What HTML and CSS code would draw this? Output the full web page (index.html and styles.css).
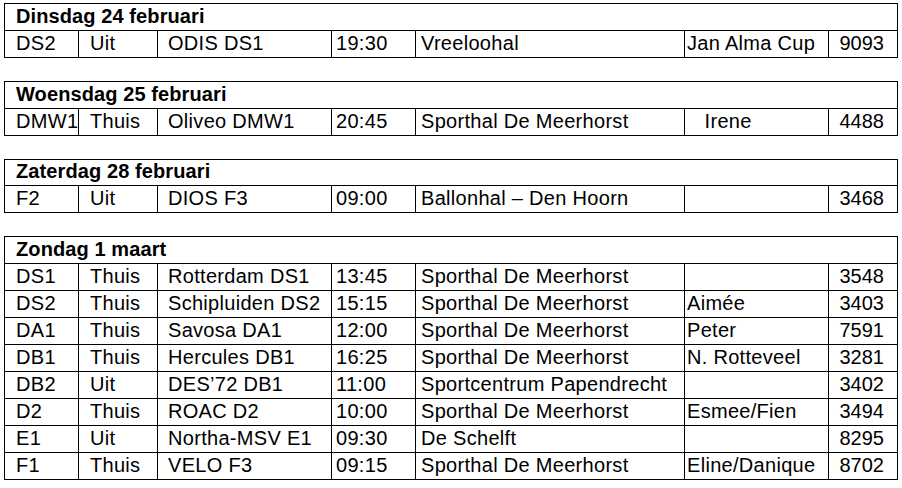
FILE: index.html
```html
<!DOCTYPE html>
<html lang="nl">
<head>
<meta charset="utf-8">
<title>Programma</title>
<link rel="stylesheet" href="styles.css">
</head>
<body>
<main class="schedule">
  <section class="day">
    <div class="day-title">Dinsdag 24 februari</div>
    <div class="match"><span class="c team">DS2</span><span class="c where">Uit</span><span class="c opp">ODIS DS1</span><span class="c time">19:30</span><span class="c venue">Vreeloohal</span><span class="c ref">Jan Alma Cup</span><span class="c code">9093</span></div>
  </section>
  <section class="day">
    <div class="day-title">Woensdag 25 februari</div>
    <div class="match"><span class="c team">DMW1</span><span class="c where">Thuis</span><span class="c opp">Oliveo DMW1</span><span class="c time">20:45</span><span class="c venue">Sporthal De Meerhorst</span><span class="c ref">&nbsp;&nbsp; Irene</span><span class="c code">4488</span></div>
  </section>
  <section class="day short">
    <div class="day-title">Zaterdag 28 februari</div>
    <div class="match"><span class="c team">F2</span><span class="c where">Uit</span><span class="c opp">DIOS F3</span><span class="c time">09:00</span><span class="c venue">Ballonhal – Den Hoorn</span><span class="c ref"></span><span class="c code">3468</span></div>
  </section>
  <section class="day">
    <div class="day-title">Zondag 1 maart</div>
    <div class="match"><span class="c team">DS1</span><span class="c where">Thuis</span><span class="c opp">Rotterdam DS1</span><span class="c time">13:45</span><span class="c venue">Sporthal De Meerhorst</span><span class="c ref"></span><span class="c code">3548</span></div>
    <div class="match"><span class="c team">DS2</span><span class="c where">Thuis</span><span class="c opp">Schipluiden DS2</span><span class="c time">15:15</span><span class="c venue">Sporthal De Meerhorst</span><span class="c ref">Aimée</span><span class="c code">3403</span></div>
    <div class="match"><span class="c team">DA1</span><span class="c where">Thuis</span><span class="c opp">Savosa DA1</span><span class="c time">12:00</span><span class="c venue">Sporthal De Meerhorst</span><span class="c ref">Peter</span><span class="c code">7591</span></div>
    <div class="match"><span class="c team">DB1</span><span class="c where">Thuis</span><span class="c opp">Hercules DB1</span><span class="c time">16:25</span><span class="c venue">Sporthal De Meerhorst</span><span class="c ref">N. Rotteveel</span><span class="c code">3281</span></div>
    <div class="match"><span class="c team">DB2</span><span class="c where">Uit</span><span class="c opp">DES’72 DB1</span><span class="c time">11:00</span><span class="c venue">Sportcentrum Papendrecht</span><span class="c ref"></span><span class="c code">3402</span></div>
    <div class="match"><span class="c team">D2</span><span class="c where">Thuis</span><span class="c opp">ROAC D2</span><span class="c time">10:00</span><span class="c venue">Sporthal De Meerhorst</span><span class="c ref">Esmee/Fien</span><span class="c code">3494</span></div>
    <div class="match"><span class="c team">E1</span><span class="c where">Uit</span><span class="c opp">Northa-MSV E1</span><span class="c time">09:30</span><span class="c venue">De Schelft</span><span class="c ref"></span><span class="c code">8295</span></div>
    <div class="match"><span class="c team">F1</span><span class="c where">Thuis</span><span class="c opp">VELO F3</span><span class="c time">09:15</span><span class="c venue">Sporthal De Meerhorst</span><span class="c ref">Eline/Danique</span><span class="c code">8702</span></div>
  </section>
</main>
</body>
</html>
```
FILE: styles.css
```css
html, body {
  margin: 0;
  padding: 0;
  background: #ffffff;
}

body {
  padding: 3px 0 0 4px;
  font-family: "Liberation Sans", Arial, sans-serif;
  font-size: 20px;
  color: #000000;
}

.schedule {
  display: flex;
  flex-direction: column;
  gap: 23px;
}

.day {
  width: 894px;
  box-sizing: border-box;
  border: 1px solid #000000;
}

.day-title {
  height: 26px;
  line-height: 24px;
  padding-left: 11px;
  font-weight: bold;
  letter-spacing: 0.1px;
  white-space: nowrap;
}

.match {
  display: grid;
  grid-template-columns: 73px 79px 174px 84px 269px 144px 69px;
  height: 26px;
  border-top: 1px solid #000000;
}

.short .day-title {
  height: 25px;
  line-height: 23px;
}

.c {
  display: block;
  line-height: 24px;
  letter-spacing: 0.3px;
  white-space: pre;
  overflow: hidden;
  box-sizing: border-box;
  border-left: 1px solid #000000;
}

.team {
  border-left: none;
  padding-left: 11px;
}

.where {
  padding-left: 11px;
}

.opp {
  padding-left: 10px;
}

.time {
  padding-left: 4px;
}

.venue {
  padding-left: 5px;
}

.ref {
  padding-left: 2px;
}

.code {
  text-align: right;
  padding-right: 13px;
  letter-spacing: 0;
}
```
